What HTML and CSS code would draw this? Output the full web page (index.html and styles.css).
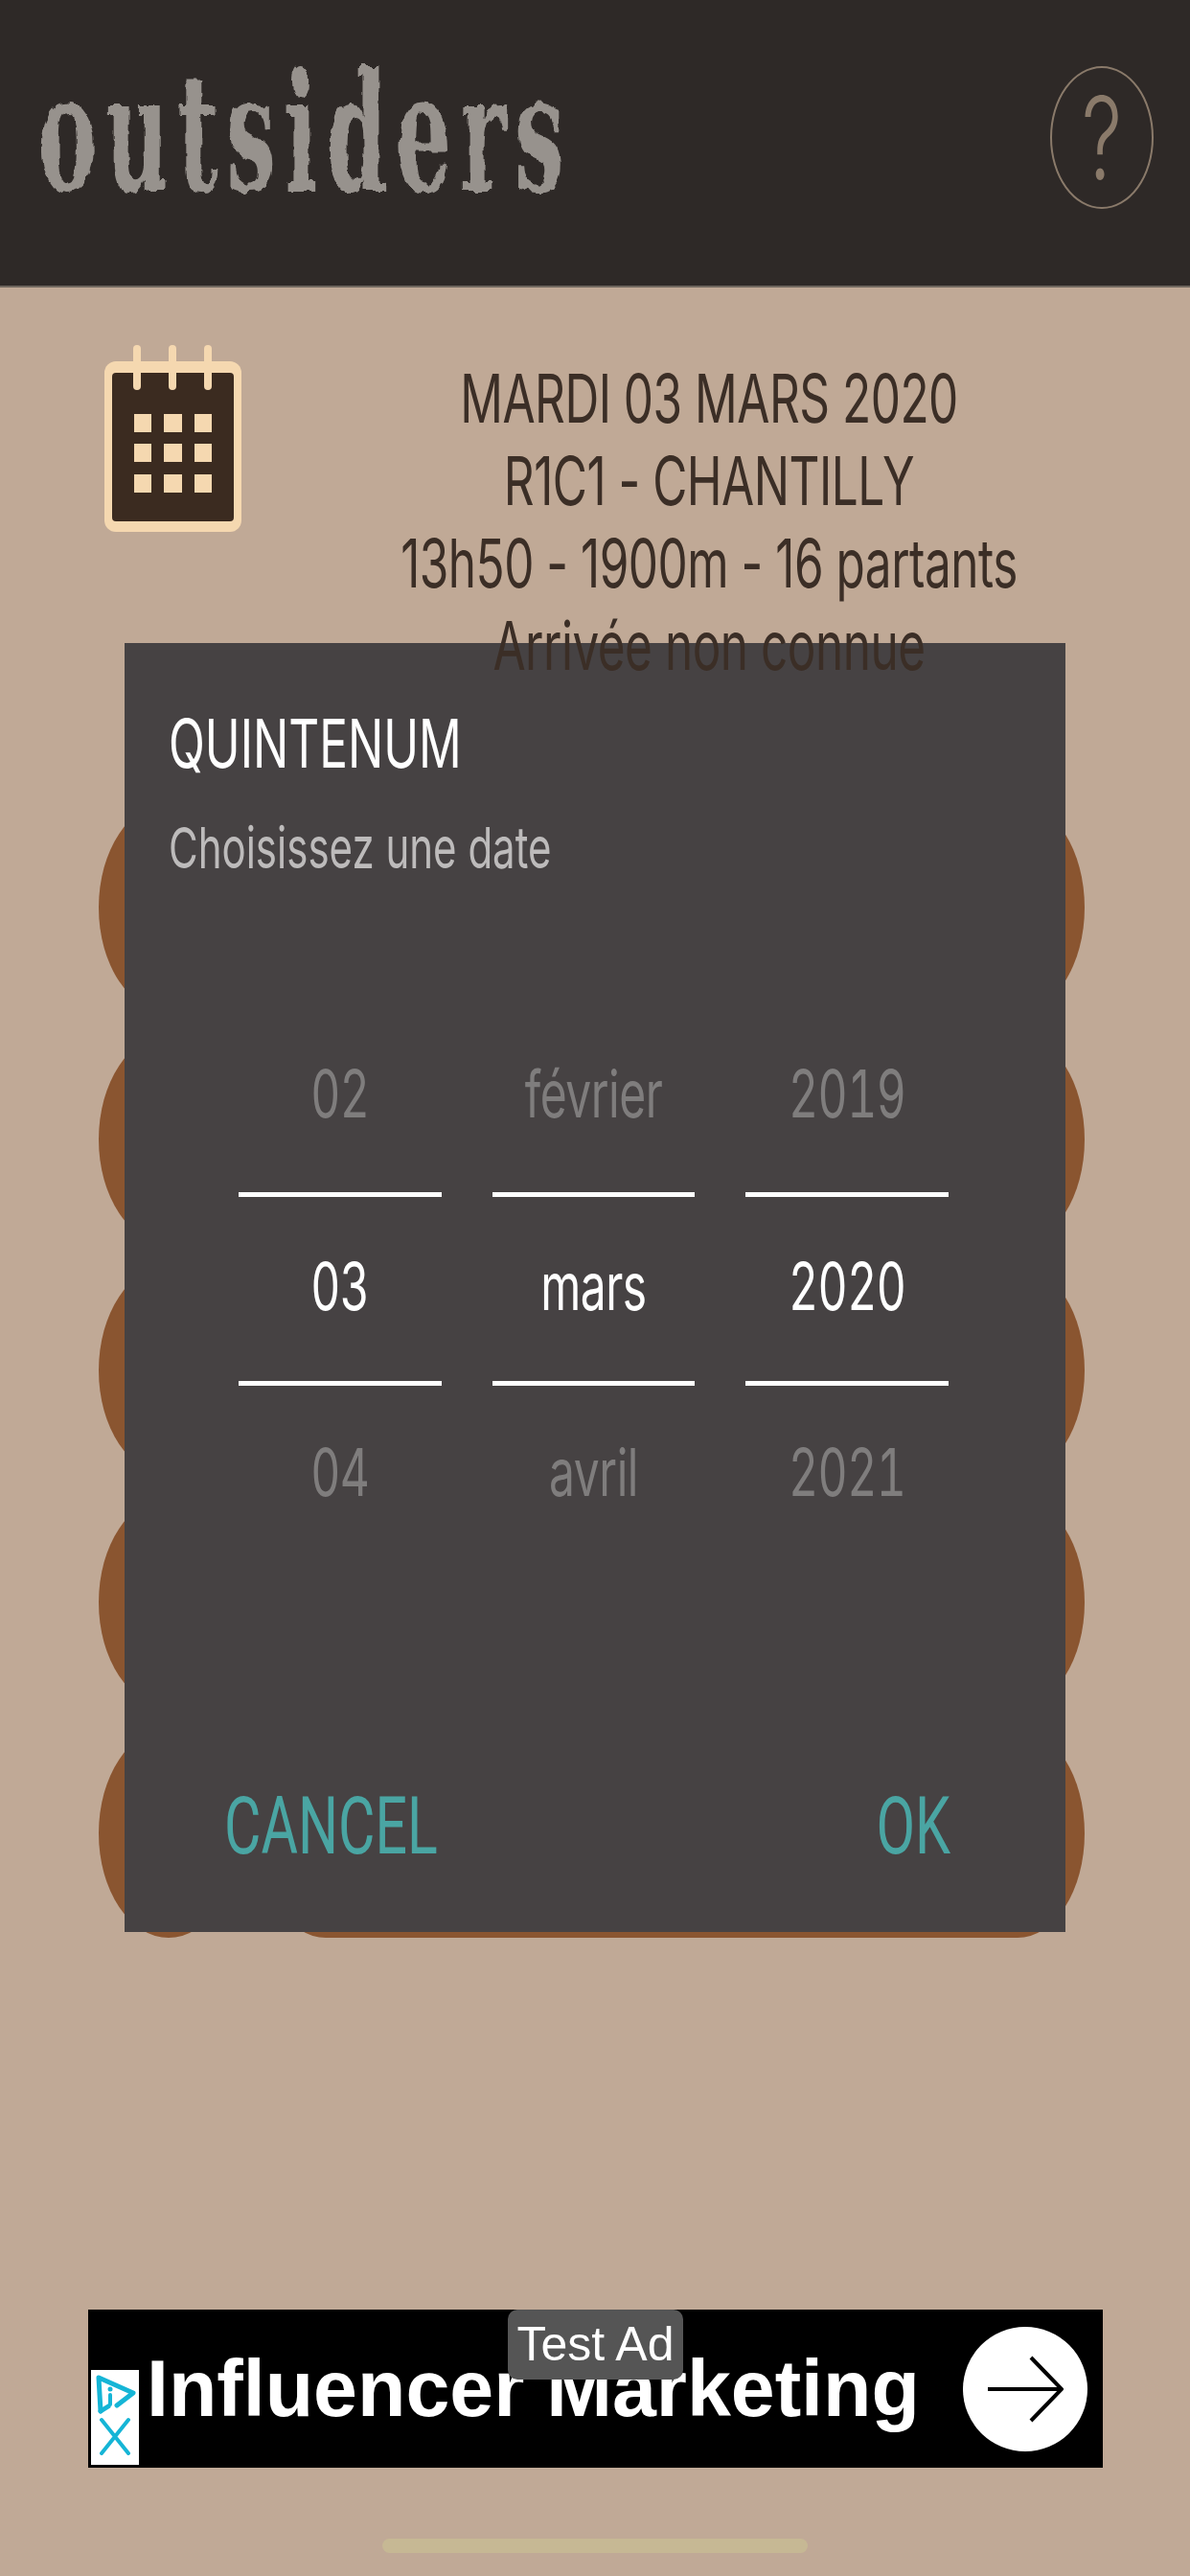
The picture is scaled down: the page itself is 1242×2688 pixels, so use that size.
FILE: index.html
```html
<!DOCTYPE html>
<html lang="fr">
<head>
  <meta charset="UTF-8">
  <meta name="viewport" content="width=device-width, initial-scale=1.0">
  <title>Outsiders</title>
  <link rel="stylesheet" href="styles.css">
</head>
<body>
  <svg class="defs" width="0" height="0">
    <filter id="rough" x="-5%" y="-5%" width="110%" height="110%">
      <feTurbulence type="fractalNoise" baseFrequency="0.11" numOctaves="2" seed="4"/>
      <feDisplacementMap in="SourceGraphic" scale="6"/>
    </filter>
  </svg>

  <div class="screen">
    <header class="top-bar">
      <span class="logo">outsiders</span>
      <div class="help"><span class="tall">?</span></div>
    </header>

    <section class="race-info">
      <svg class="calendar" width="143" height="195" viewBox="0 0 143 195">
        <rect x="0" y="17" width="143" height="178" rx="12" fill="#f5d8b0"/>
        <rect x="8" y="29" width="127" height="155" rx="4" fill="#3b2b20"/>
        <g fill="none" stroke="#f5d8b0" stroke-width="8" stroke-linecap="round">
          <path d="M34 4V43"/>
          <path d="M71 4V43"/>
          <path d="M108 4V43"/>
        </g>
        <g fill="#f5d8b0">
          <rect x="31" y="72" width="18" height="19"/>
          <rect x="62" y="72" width="19" height="19"/>
          <rect x="94" y="72" width="18" height="19"/>
          <rect x="31" y="103" width="18" height="19"/>
          <rect x="62" y="103" width="19" height="19"/>
          <rect x="94" y="103" width="18" height="19"/>
          <rect x="31" y="135" width="18" height="19"/>
          <rect x="62" y="135" width="19" height="19"/>
          <rect x="94" y="135" width="18" height="19"/>
        </g>
      </svg>
      <div class="race-text">
        <p><span class="tall">MARDI 03 MARS 2020</span></p>
        <p><span class="tall">R1C1 - CHANTILLY</span></p>
        <p><span class="tall">13h50 - 1900m - 16 partants</span></p>
        <p><span class="tall">Arrivée non connue</span></p>
      </div>
    </section>

    <section class="rows">
      <div class="row"><div class="row-dot"></div><div class="row-pill"></div></div>
      <div class="row"><div class="row-dot"></div><div class="row-pill"></div></div>
      <div class="row"><div class="row-dot"></div><div class="row-pill"></div></div>
      <div class="row"><div class="row-dot"></div><div class="row-pill"></div></div>
      <div class="row"><div class="row-dot"></div><div class="row-pill"></div></div>
    </section>

    <div class="dialog">
      <h2 class="dialog-title"><span class="tall">QUINTENUM</span></h2>
      <p class="dialog-sub"><span class="tall">Choisissez une date</span></p>

      <div class="picker">
        <div class="wheel">
          <div class="wheel-item"><span class="tall">02</span></div>
          <div class="wheel-item current"><span class="tall">03</span></div>
          <div class="wheel-item next"><span class="tall">04</span></div>
        </div>
        <div class="wheel">
          <div class="wheel-item"><span class="tall">février</span></div>
          <div class="wheel-item current"><span class="tall">mars</span></div>
          <div class="wheel-item next"><span class="tall">avril</span></div>
        </div>
        <div class="wheel">
          <div class="wheel-item"><span class="tall">2019</span></div>
          <div class="wheel-item current"><span class="tall">2020</span></div>
          <div class="wheel-item next"><span class="tall">2021</span></div>
        </div>
      </div>

      <div class="dialog-actions">
        <button class="dialog-btn"><span class="tall">CANCEL</span></button>
        <button class="dialog-btn"><span class="tall">OK</span></button>
      </div>
    </div>

    <aside class="ad">
      <div class="ad-choices">
        <svg width="50" height="99" viewBox="0 0 50 99">
          <g fill="none" stroke="#15b5d6" stroke-linecap="round" stroke-linejoin="round">
            <path d="M10 43L8 8L44 24L27 37" stroke-width="5"/>
            <path d="M10 43L18 38" stroke-width="5"/>
            <path d="M20 26V36" stroke-width="4"/>
            <path d="M11 52L39 87M39 52L11 87" stroke-width="4"/>
          </g>
          <circle cx="20" cy="20" r="2.500" fill="#15b5d6"/>
        </svg>
      </div>
      <span class="ad-title">Influencer Marketing</span>
      <div class="ad-go">
        <svg width="80" height="70" viewBox="0 0 80 70">
          <path d="M1 35H78M46 2L78 35L46 68" fill="none" stroke="#000" stroke-width="4"/>
        </svg>
      </div>
      <div class="ad-label">Test Ad</div>
    </aside>

    <div class="home-bar"></div>
  </div>
</body>
</html>
```

FILE: styles.css
```css
* {
  box-sizing: border-box;
}

body {
  margin: 0;
  font-family: Inter, "Noto Sans", sans-serif;
  background-color: #c0a996;
}

.defs {
  position: absolute;
}

.screen {
  position: relative;
  width: 1242px;
  height: 2688px;
  overflow: hidden;
  background-color: #c0a996;
  display: flex;
  flex-direction: column;
}

/* the app was stretched vertically in the capture */
.tall {
  display: inline-block;
  transform: scaleY(1.42);
}

/* Header */
.top-bar {
  height: 300px;
  flex-shrink: 0;
  background-color: #2e2927;
  border-bottom: 2px solid #6f675f;
  display: flex;
  justify-content: space-between;
  align-items: flex-start;
  padding: 69px 38px 0 40px;
}

.logo {
  display: inline-block;
  margin-top: 33px;
  height: 130px;
  font-family: "DejaVu Serif", serif;
  font-weight: 700;
  font-size: 92px;
  letter-spacing: 8.5px;
  line-height: 130px;
  color: #97928d;
  filter: url(#rough);
  transform: scaleY(1.85);
  transform-origin: center 97px;
}

.help {
  width: 108px;
  height: 149px;
  border: 2px solid #8a7a6a;
  border-radius: 50%;
  color: #8a7a6a;
  font-size: 84px;
  font-weight: 300;
  display: flex;
  align-items: center;
  justify-content: center;
}

/* Race info */
.race-info {
  display: flex;
  align-items: flex-start;
  padding: 60px 0 0 109px;
  height: 538px;
  flex-shrink: 0;
}

.calendar {
  flex-shrink: 0;
}

.race-text {
  position: relative;
  z-index: 2;
  width: 800px;
  margin-left: 88px;
  padding-top: 12px;
  color: #3b2e26;
  font-size: 49.5px;
  font-weight: 400;
  letter-spacing: -0.5px;
  text-align: center;
}

.race-text p {
  margin: 0;
  height: 86px;
  line-height: 86px;
}

/* Buttons behind the dialog */
.rows {
  display: flex;
  flex-direction: column;
  gap: 23.5px;
  padding: 0 110px 0 103px;
}

.row {
  display: flex;
  gap: 21px;
  height: 218px;
}

.row-dot {
  width: 146px;
  border-radius: 50%;
  background-color: #8a5530;
}

.row-pill {
  flex-grow: 1;
  border-radius: 70px / 109px;
  background-color: #8a5530;
}

/* Date dialog */
.dialog {
  position: absolute;
  top: 671px;
  left: 130px;
  width: 982px;
  height: 1345px;
  background-color: #464243;
  padding: 70px 46px 0;
}

.dialog-title {
  margin: 0;
  height: 68px;
  line-height: 68px;
  color: #fff;
  font-size: 49.5px;
  font-weight: 400;
}

.dialog-sub {
  margin: 46px 0 0;
  height: 60px;
  line-height: 60px;
  color: #bdbbbb;
  font-size: 42px;
  font-weight: 400;
}

.picker {
  display: flex;
  gap: 53px;
  margin: 0 76px 0 73px;
  padding-top: 125px;
}

.wheel {
  width: 212px;
  display: flex;
  flex-direction: column;
  text-align: center;
}

.wheel-item {
  height: 204px;
  line-height: 204px;
  color: #7f7d7d;
  font-size: 48px;
  font-weight: 400;
  font-variant-numeric: tabular-nums;
  letter-spacing: -0.5px;
}

.wheel-item.current {
  color: #fff;
  height: 202px;
  line-height: 188px;
  border-top: 5px solid #fff;
  border-bottom: 5px solid #fff;
}

.wheel-item.next {
  height: 182px;
  line-height: 182px;
}

.dialog-actions {
  position: absolute;
  top: 1190px;
  left: 104px;
  width: 758px;
  display: flex;
  justify-content: space-between;
}

.dialog-btn {
  background: none;
  border: none;
  padding: 0;
  color: #4aa5a3;
  font-family: Roboto, sans-serif;
  font-size: 59px;
  font-weight: 400;
  line-height: 90px;
}

/* Ad banner */
.ad {
  position: absolute;
  top: 2410px;
  left: 92px;
  width: 1059px;
  height: 165px;
  background-color: #000;
  display: flex;
  align-items: center;
}

.ad-choices {
  position: absolute;
  left: 3px;
  top: 63px;
  width: 50px;
  height: 99px;
  background-color: #fff;
}

.ad-title {
  margin-left: 61px;
  color: #fff;
  font-family: "Liberation Sans", Arial, sans-serif;
  font-size: 82.5px;
  font-weight: 700;
  white-space: nowrap;
}

.ad-go {
  position: absolute;
  left: 913px;
  top: 18px;
  width: 130px;
  height: 130px;
  border-radius: 50%;
  background-color: #fff;
  display: flex;
  align-items: center;
  justify-content: center;
}

.ad-label {
  position: absolute;
  left: 438px;
  top: 0;
  width: 183px;
  height: 73px;
  border-radius: 10px;
  background-color: #555;
  color: #fff;
  font-family: "Liberation Sans", Arial, sans-serif;
  font-size: 50px;
  line-height: 73px;
  text-align: center;
}

/* iOS home indicator */
.home-bar {
  position: absolute;
  left: 399px;
  top: 2649px;
  width: 444px;
  height: 15px;
  border-radius: 8px;
  background-color: #c6b894;
}
```
